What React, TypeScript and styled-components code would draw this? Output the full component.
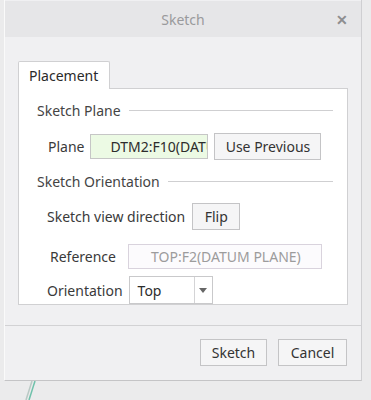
import styled, { createGlobalStyle } from "styled-components";

const Global = createGlobalStyle`
  body {
    margin: 0;
    background: #ebebec;
    font-family: "Noto Sans", "Open Sans", sans-serif;
  }
`;

const Page = styled.div`
  width: 371px;
  height: 400px;
  display: flex;
  flex-direction: column;
  padding-left: 4px;
  box-sizing: border-box;
  background: #ebebec;
  overflow: hidden;
`;

const Dialog = styled.div`
  width: 358px;
  height: 381px;
  background: #f0f0f2;
  border-right: 1px solid #cfcfd2;
  border-bottom: 1px solid #c4c4c6;
  border-left: 1px solid #fafafa;
  display: flex;
  flex-direction: column;
  box-sizing: border-box;
`;

const TitleBar = styled.div`
  height: 36px;
  margin-top: 1px;
  background: #e6e6e8;
  display: flex;
  align-items: center;
  justify-content: center;
  position: relative;
  color: #9a9a9c;
  font-size: 14px;
`;

const Close = styled.span`
  position: absolute;
  right: 13px;
  top: 9px;
  font-size: 14px;
  font-weight: bold;
  color: #8e8e90;
`;

const Body = styled.div`
  padding: 24px 0 0 13px;
`;

const Tab = styled.div`
  width: 92px;
  height: 28px;
  box-sizing: border-box;
  background: #fff;
  border: 1px solid #d0d0d2;
  border-bottom: none;
  border-radius: 2px 2px 0 0;
  padding-left: 10px;
  display: flex;
  align-items: center;
  font-size: 14px;
  color: #2a2a2a;
  position: relative;
  z-index: 1;
  margin-bottom: -1px;
`;

const Panel = styled.div`
  width: 330px;
  height: 217px;
  box-sizing: border-box;
  background: #fff;
  border: 1px solid #d0d0d2;
  padding: 12px 14px 0 18px;
  display: flex;
  flex-direction: column;
`;

const Heading = styled.div<{ $mt?: number }>`
  display: flex;
  align-items: center;
  gap: 8px;
  font-size: 14px;
  color: #444;
  height: 22px;
  margin-top: ${(p) => p.$mt ?? 0}px;

  &::after {
    content: "";
    flex: 1;
    height: 1px;
    background: #cfcfd1;
  }
`;

const Row = styled.div<{ $indent: number; $mt: number; $gap: number }>`
  display: flex;
  align-items: center;
  padding-left: ${(p) => p.$indent}px;
  gap: ${(p) => p.$gap}px;
  margin-top: ${(p) => p.$mt}px;
`;

const Label = styled.span`
  font-size: 14px;
  color: #3a3a3a;
`;

const Field = styled.div<{ $w: number; $green?: boolean }>`
  width: ${(p) => p.$w}px;
  height: 25px;
  box-sizing: border-box;
  border: 1px solid ${(p) => (p.$green ? "#c6c6c6" : "#d9d3dd")};
  background: ${(p) => (p.$green ? "#ecfae4" : "#fcfbfd")};
  color: ${(p) => (p.$green ? "#2c2c2c" : "#9c9c9c")};
  font-size: 14px;
  display: flex;
  align-items: center;
  padding-left: ${(p) => (p.$green ? 19 : 22)}px;
  white-space: nowrap;
  overflow: hidden;
`;

const Button = styled.button<{ $w: number }>`
  width: ${(p) => p.$w}px;
  height: 27px;
  box-sizing: border-box;
  border: 1px solid #c4c4c6;
  background: #f5f5f6;
  color: #333;
  font-family: inherit;
  font-size: 14px;
  padding: 0;
`;

const Select = styled.div`
  width: 84px;
  height: 28px;
  box-sizing: border-box;
  border: 1px solid #c9c9cb;
  background: #fff;
  display: flex;
  font-size: 14px;
  color: #2c2c2c;
`;

const SelectValue = styled.div`
  flex: 1;
  display: flex;
  align-items: center;
  padding-left: 8px;
  border-right: 1px solid #d4d4d6;
`;

const SelectArrow = styled.div`
  width: 17px;
  display: flex;
  align-items: center;
  justify-content: center;
`;

const Separator = styled.div`
  margin-top: 20px;
  height: 1px;
  width: 356px;
  background: #d2d2d4;
`;

const Footer = styled.div`
  display: flex;
  justify-content: flex-end;
  gap: 11px;
  padding: 13px 14px 0 0;
`;

const Backdrop = styled.svg`
  display: block;
  margin-left: 18px;
`;

export default function App() {
  return (
    <>
      <Global />
      <Page>
        <Dialog>
          <TitleBar>
            Sketch
            <Close>✕</Close>
          </TitleBar>
          <Body>
            <Tab>Placement</Tab>
            <Panel>
              <Heading>Sketch Plane</Heading>
              <Row $indent={11} $mt={12} $gap={6}>
                <Label>Plane</Label>
                <Field $w={118} $green>
                  DTM2:F10(DATU
                </Field>
                <Button $w={107}>Use Previous</Button>
              </Row>
              <Heading $mt={12}>Sketch Orientation</Heading>
              <Row $indent={10} $mt={12} $gap={7}>
                <Label>Sketch view direction</Label>
                <Button $w={48}>Flip</Button>
              </Row>
              <Row $indent={13} $mt={14} $gap={12}>
                <Label>Reference</Label>
                <Field $w={194}>TOP:F2(DATUM PLANE)</Field>
              </Row>
              <Row $indent={10} $mt={7} $gap={6}>
                <Label>Orientation</Label>
                <Select>
                  <SelectValue>Top</SelectValue>
                  <SelectArrow>
                    <svg width="8" height="5" viewBox="0 0 8 5">
                      <path d="M0 0h8L4 5z" fill="#666" />
                    </svg>
                  </SelectArrow>
                </Select>
              </Row>
            </Panel>
          </Body>
          <Separator />
          <Footer>
            <Button $w={67}>Sketch</Button>
            <Button $w={69}>Cancel</Button>
          </Footer>
        </Dialog>
        <Backdrop width="30" height="19" viewBox="0 0 30 19">
          <path d="M10 0L4 19" stroke="#b9c8c4" strokeWidth="1.5" />
          <path d="M13 0L7 19" stroke="#6fc1ab" strokeWidth="1.5" />
        </Backdrop>
      </Page>
    </>
  );
}
